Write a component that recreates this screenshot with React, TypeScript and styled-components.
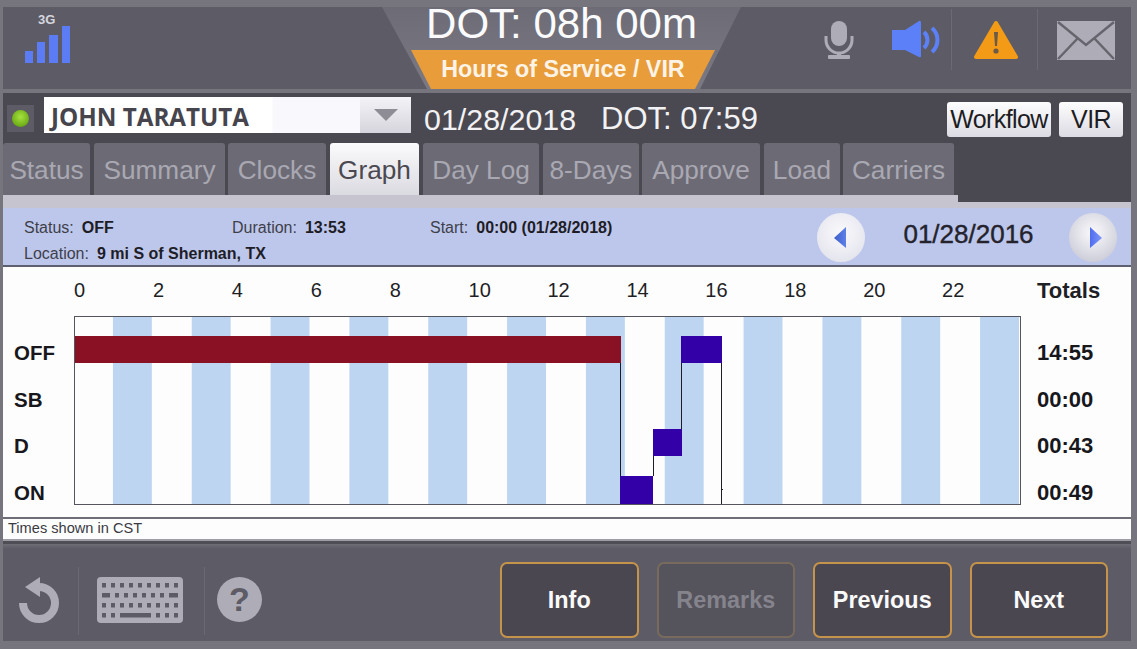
import React from 'react';
import styled, {createGlobalStyle} from 'styled-components';

const GlobalStyle = createGlobalStyle`
  html, body {
    margin: 0;
    padding: 0;
    background: #76757e;
  }
  * {
    box-sizing: border-box;
  }
`;

const Screen = styled.div`
  width: 1137px;
  height: 649px;
  padding: 7px 6px 8px 3px;
  background: #76757e;
  font-family: "Liberation Sans", Arial, sans-serif;
  overflow: hidden;
`;

const TopBar = styled.header`
  display: flex;
  height: 82px;
  background: #5d5b65;
`;
const SignalArea = styled.div`
  width: 379px;
  padding: 7px 0 0 22px;
`;
const SignalLabel = styled.div`
  padding-left: 13px;
  height: 12px;
  font-size: 13px;
  line-height: 12px;
  font-weight: bold;
  color: #d5d5de;
`;
const SignalBars = styled.div`
  display: flex;
  align-items: flex-end;
  gap: 4px;
  height: 37px;
`;
const SignalBar = styled.span<{$h: number}>`
  width: 8.2px;
  height: ${p => p.$h}px;
  background: #5b7cf5;
`;
const DotPlate = styled.div`
  width: 359px;
  height: 82px;
  background: linear-gradient(#6d6c76, #7b7a84);
  clip-path: polygon(0 0, 100% 0, 318px 100%, 45px 100%);
`;
const DotText = styled.div`
  height: 43px;
  margin-top: -6px;
  text-align: center;
  font-size: 42px;
  line-height: 45px;
  color: #fbfbfd;
`;
const HosBadge = styled.div`
  width: 304px;
  height: 39px;
  margin: 6px 0 0 29px;
  background: #e89c3a;
  clip-path: polygon(0 0, 100% 0, 284px 100%, 20px 100%);
  text-align: center;
  font-size: 23.3px;
  line-height: 38px;
  font-weight: bold;
  color: #fbf3e6;
`;
const StatusIcons = styled.div`
  flex: 1;
  display: flex;
  align-items: flex-start;
  padding-top: 13px;
`;
const IconSlot = styled.div<{$ml: number}>`
  display: flex;
  margin-left: ${p => p.$ml}px;
`;
const IconDivider = styled.span<{$ml: number}>`
  width: 1px;
  height: 61px;
  margin: -11px 0 0 ${p => p.$ml}px;
  background: #6b6a74;
`;

const Separator = styled.div`
  height: 4px;
  background: #76757e;
`;

const DriverRow = styled.div`
  display: flex;
  align-items: flex-start;
  height: 50px;
  padding: 0 8px 0 4px;
  background: #4a4850;
`;
const LedBox = styled.div`
  display: flex;
  align-items: center;
  justify-content: center;
  width: 27px;
  height: 27px;
  margin-top: 12px;
  background: #5d5b65;
`;
const Led = styled.span`
  width: 17px;
  height: 17px;
  border-radius: 50%;
  background: radial-gradient(circle at 50% 40%, #a6e23f, #6aaa14 75%);
`;
const DriverSelect = styled.div`
  display: flex;
  width: 367px;
  height: 36px;
  margin: 4px 0 0 10px;
  background: linear-gradient(90deg, #fff 228px, #f8f8fd 229px);
`;
const DriverName = styled.div`
  flex: 1;
  padding-left: 7px;
  font-family: "Open Sans", "Noto Sans", sans-serif;
  font-size: 24.2px;
  line-height: 39px;
  font-weight: bold;
  color: #46444c;
`;
const SelectArrow = styled.div`
  display: flex;
  align-items: center;
  justify-content: center;
  width: 51px;
  background: linear-gradient(#f3f3f7, #d6d5dd);

  &::after {
    content: '';
    border-left: 12px solid transparent;
    border-right: 12px solid transparent;
    border-top: 12px solid #8e8d96;
  }
`;
const DateText = styled.div<{$ml: number; $fs: number}>`
  margin: 7px 0 0 ${p => p.$ml}px;
  font-size: ${p => p.$fs}px;
  line-height: 38px;
  color: #f2f2f5;
`;
const SmallButton = styled.button<{$w: number; $ml: string}>`
  width: ${p => p.$w}px;
  height: 35px;
  margin: 9px 0 0 ${p => p.$ml};
  padding: 0;
  border: 0;
  border-radius: 3px;
  background: linear-gradient(#fdfdfe, #dcdbe3);
  font-family: inherit;
  font-size: 25px;
  letter-spacing: -0.6px;
  color: #1d1c22;
`;

const TabBar = styled.nav`
  height: 59px;
  background: #4a4850;
`;
const Tabs = styled.div`
  display: flex;
  height: 52px;
`;
const Tab = styled.div<{$w: number; $ml: number; $active?: boolean}>`
  width: ${p => p.$w}px;
  margin-left: ${p => p.$ml}px;
  border-radius: 3px 3px 0 0;
  background: ${p => (p.$active ? 'linear-gradient(#fbfbfc, #dadae1)' : '#6c6b75')};
  text-align: center;
  font-size: 26.2px;
  line-height: 54px;
  color: ${p => (p.$active ? '#4a4850' : '#a9a8b2')};
`;
const TabStrip = styled.div`
  width: 955px;
  height: 7px;
  background: #c5c4cf;
`;
const TabBase = styled.div`
  height: 6px;
  background: #c5c4cf;
`;

const InfoPanel = styled.section`
  display: flex;
  justify-content: space-between;
  height: 59px;
  background: #bdc7ec;
  border-bottom: 2px solid #5e6070;
`;
const InfoFields = styled.div`
  display: flex;
  flex-direction: column;
  gap: 7px;
  padding: 10px 0 0 21px;
`;
const InfoRow = styled.div`
  display: flex;
`;
const InfoField = styled.div<{$w?: number}>`
  width: ${p => (p.$w ? `${p.$w}px` : 'auto')};
  font-size: 16px;
  line-height: 19px;
  color: #3f3f4a;

  b {
    margin-left: 8px;
    color: #1e1d26;
  }
`;
const DateNav = styled.div`
  display: flex;
  align-items: flex-start;
  padding: 5px 14px 0 0;
`;
const RoundButton = styled.div<{$shade: string}>`
  display: flex;
  align-items: center;
  justify-content: center;
  width: 48px;
  height: 49px;
  border-radius: 50%;
  background: radial-gradient(circle at 50% 40%, #fafafc, ${p => p.$shade} 85%);
`;
const NavDate = styled.div`
  width: 204px;
  padding-left: 3px;
  text-align: center;
  font-size: 26px;
  line-height: 42px;
  -webkit-text-stroke: 0.4px #24232b;
  color: #24232b;
`;

const GraphArea = styled.section`
  display: grid;
  grid-template-columns: 71px 947px 1fr;
  grid-template-rows: 49px 189px 1fr;
  height: 252px;
  background: #fdfdfe;
  border-bottom: 2px solid #6f6e78;
`;
const Hours = styled.div`
  grid-column: 2;
  display: grid;
  grid-template-columns: repeat(12, 1fr);
  padding-top: 11px;
`;
const Hour = styled.span`
  font-size: 20px;
  line-height: 24px;
  color: #1f1f26;
`;
const TotalsTitle = styled.div`
  padding: 12px 0 0 16px;
  font-size: 22px;
  line-height: 24px;
  font-weight: bold;
  color: #1f1f26;
`;
const RowLabels = styled.div<{$pl: number; $fs: number}>`
  display: flex;
  flex-direction: column;
  height: 200px;
  padding: 14px 0 0 ${p => p.$pl}px;
  font-size: ${p => p.$fs}px;
`;
const RowLabel = styled.div`
  height: 46.7px;
  line-height: 46px;
  font-weight: bold;
  color: #17171c;
`;
const Plot = styled.svg`
  display: block;
  grid-column: 2;
  grid-row: 2;
`;

const Note = styled.div`
  height: 22px;
  padding-left: 5px;
  background: #fdfdfe;
  border-bottom: 2px solid #9e9da6;
  font-size: 14.6px;
  line-height: 19px;
  color: #3a3a42;
`;

const BottomBar = styled.footer`
  display: flex;
  align-items: flex-start;
  height: 100px;
  background: linear-gradient(#6e6d76, #5d5b65 5px);
  border-top: 3px solid #4f4e57;
`;
const ToolIcons = styled.div`
  display: flex;
  align-items: flex-start;
  width: 497px;
  padding: 33px 0 0 15px;
`;
const ToolDivider = styled.span<{$ml: number}>`
  width: 1px;
  height: 68px;
  margin: -10px 0 0 ${p => p.$ml}px;
  background: #6b6a74;
`;
const HelpIcon = styled.div`
  width: 45px;
  height: 45px;
  margin-left: 12px;
  border-radius: 50%;
  background: #aeadb7;
  text-align: center;
  font-size: 34px;
  line-height: 45px;
  font-weight: bold;
  color: #5d5b65;
`;
const Actions = styled.div`
  display: flex;
  gap: 18px;
  padding-top: 18px;
`;
const ActionButton = styled.button<{$disabled?: boolean}>`
  width: 138.5px;
  height: 76px;
  padding: 0;
  border: 2px solid ${p => (p.$disabled ? '#786a5c' : '#c6934a')};
  border-radius: 7px;
  background: ${p => (p.$disabled ? '#55535c' : '#4a4750')};
  font-family: inherit;
  font-size: 23.4px;
  font-weight: bold;
  color: ${p => (p.$disabled ? '#85848d' : '#fafafa')};
`;

const grey = '#aeadb7';

function MicIcon() {
    return <svg width="30" height="39" viewBox="0 0 30 39">
        <rect x="7" y="1" width="16" height="25" rx="8" fill={grey}/>
        <path d="M2 16v4a13 13 0 0 0 26 0v-4" fill="none" stroke={grey} strokeWidth="3"/>
        <rect x="13" y="32" width="4" height="5" fill={grey}/>
        <rect x="4" y="35" width="22" height="4" rx="1" fill={grey}/>
    </svg>;
}

function SpeakerIcon() {
    return <svg width="48" height="39" viewBox="0 0 48 39">
        <path d="M0 10h13L27 1q2 -1 2 2v33q0 2 -2 1L13 30H0z" fill="#5b80f8"/>
        <path d="M32 12a11 11 0 0 1 0 16" fill="none" stroke="#5b80f8" strokeWidth="4"/>
        <path d="M40 8a16 16 0 0 1 0 24" fill="none" stroke="#5b80f8" strokeWidth="4"/>
    </svg>;
}

function WarningIcon() {
    return <svg width="44" height="40" viewBox="0 0 44 40">
        <path d="M22 3L42 37H2z" fill="#f39a16" stroke="#f39a16" strokeWidth="4" strokeLinejoin="round"/>
        <path d="M20 12h4l-1 14h-2z" fill="#6b5a48"/>
        <circle cx="22" cy="31" r="2.600" fill="#6b5a48"/>
    </svg>;
}

function MailIcon() {
    return <svg width="58" height="39" viewBox="0 0 58 39" style={{marginTop: 1}}>
        <rect width="58" height="39" fill={grey}/>
        <path d="M1 1L29 24L57 1M1 38L21 17M57 38L37 17" fill="none" stroke="#66656e" strokeWidth="2.500"/>
    </svg>;
}

function RefreshIcon() {
    return <svg width="44" height="46" viewBox="0 0 44 46" style={{flexShrink: 0}}>
        <path d="M5 26a16 16 0 1 0 16-16" fill="none" stroke={grey} strokeWidth="8"/>
        <path d="M7 10L22 0V20z" fill={grey}/>
    </svg>;
}

function KeyboardIcon() {
    const rows = [
        [[6, 4], [15, 4], [24, 4], [33, 4], [42, 4], [51, 4], [60, 4], [69, 4], [78, 4]],
        [[6, 8], [19, 4], [28, 4], [37, 4], [46, 4], [55, 4], [64, 4], [73, 9]],
        [[6, 4], [15, 4], [24, 4], [33, 4], [42, 4], [51, 4], [60, 4], [69, 4], [78, 4]],
        [[6, 4], [15, 4], [24, 31], [60, 4], [69, 4], [78, 4]],
    ];
    return <svg width="86" height="46" viewBox="0 0 86 46" style={{flexShrink: 0, marginLeft: 18}}>
        <rect width="86" height="46" rx="4" fill={grey}/>
        {rows.map((row, y) => row.map(([x, w]) =>
            <rect key={`${y}-${x}`} x={x - 1} y={6 + y * 10} width={w} height="4.500" fill="#5d5b65"/>
        ))}
    </svg>;
}

function LeftArrow() {
    return <svg width="12" height="21" viewBox="0 0 12 21" style={{marginRight: 2}}>
        <defs>
            <linearGradient id="leftFill" x1="0" y1="0" x2="1" y2="0">
                <stop offset="0" stopColor="#3f5fc8"/>
                <stop offset="1" stopColor="#5f80e8"/>
            </linearGradient>
        </defs>
        <path d="M12 0V21L0 11z" fill="url(#leftFill)"/>
    </svg>;
}

function RightArrow() {
    return <svg width="12" height="21" viewBox="0 0 12 21" style={{marginLeft: 5}}>
        <defs>
            <linearGradient id="rightFill" x1="0" y1="0" x2="1" y2="0">
                <stop offset="0" stopColor="#4f6cf0"/>
                <stop offset="1" stopColor="#7f98f6"/>
            </linearGradient>
        </defs>
        <path d="M0 0V21L12 11z" fill="url(#rightFill)"/>
    </svg>;
}

const colW = 946 / 24;

function GraphPlot() {
    const x = (px: number) => px - 74;
    const y = (px: number) => px - 316;
    return <Plot width="947" height="189" viewBox="0 0 947 189">
        <rect x="0.500" y="0.500" width="946" height="188" fill="#fdfdfe"/>
        {Array.from({length: 12}).map((_, i) =>
            <rect key={i} x={colW * (2 * i + 1) - 0.5} y="1" width={colW - 0.5} height="187" fill="#bdd5f1"/>
        )}
        <rect x="0.500" y="0.500" width="946" height="188" fill="none" stroke="#55555f"/>
        <rect x="1" y={y(336)} width={x(620)} height="27" fill="#8a1024"/>
        <path d={`M${x(620.5)} ${y(363)}V${y(476)}M${x(653.5)} ${y(456)}V${y(476)}M${x(681.5)} ${y(363)}V${y(429)}M${x(721.5)} ${y(363)}V${y(504)}M${x(721)} ${y(489.5)}h2`}
              stroke="#1d1c28" strokeWidth="1" fill="none"/>
        <rect x={x(620)} y={y(476)} width="33" height="28" fill="#3300a8"/>
        <rect x={x(653)} y={y(429)} width="29" height="27" fill="#3300a8"/>
        <rect x={x(681)} y={y(336)} width="41" height="27" fill="#3300a8"/>
    </Plot>;
}

const tabs = [
    {name: 'Status', w: 87, ml: 0},
    {name: 'Summary', w: 131, ml: 4},
    {name: 'Clocks', w: 98, ml: 3},
    {name: 'Graph', w: 89, ml: 4},
    {name: 'Day Log', w: 116, ml: 4},
    {name: '8-Days', w: 96, ml: 4},
    {name: 'Approve', w: 118, ml: 3},
    {name: 'Load', w: 76, ml: 4},
    {name: 'Carriers', w: 111, ml: 3},
];
const hours = [0, 2, 4, 6, 8, 10, 12, 14, 16, 18, 20, 22];

export default function App() {
    return (
        <Screen>
            <GlobalStyle/>
            <TopBar>
                <SignalArea>
                    <SignalLabel>3G</SignalLabel>
                    <SignalBars>
                        {[12, 21, 28, 37].map(h => <SignalBar key={h} $h={h}/>)}
                    </SignalBars>
                </SignalArea>
                <DotPlate>
                    <DotText>DOT: 08h 00m</DotText>
                    <HosBadge>Hours of Service / VIR</HosBadge>
                </DotPlate>
                <StatusIcons>
                    <IconSlot $ml={83}><MicIcon/></IconSlot>
                    <IconSlot $ml={38}><SpeakerIcon/></IconSlot>
                    <IconDivider $ml={11}/>
                    <IconSlot $ml={22}><WarningIcon/></IconSlot>
                    <IconDivider $ml={19}/>
                    <IconSlot $ml={19}><MailIcon/></IconSlot>
                </StatusIcons>
            </TopBar>
            <Separator/>
            <DriverRow>
                <LedBox><Led/></LedBox>
                <DriverSelect>
                    <DriverName>JOHN TARATUTA</DriverName>
                    <SelectArrow/>
                </DriverSelect>
                <DateText $ml={13} $fs={30.4}>01/28/2018</DateText>
                <DateText $ml={25} $fs={31}>DOT: 07:59</DateText>
                <SmallButton $w={104} $ml="auto">Workflow</SmallButton>
                <SmallButton $w={64} $ml="8px">VIR</SmallButton>
            </DriverRow>
            <TabBar>
                <Tabs>
                    {tabs.map(t => <Tab key={t.name} $w={t.w} $ml={t.ml} $active={t.name === 'Graph'}>{t.name}</Tab>)}
                </Tabs>
                <TabStrip/>
            </TabBar>
            <TabBase/>
            <InfoPanel>
                <InfoFields>
                    <InfoRow>
                        <InfoField $w={208}>Status:<b>OFF</b></InfoField>
                        <InfoField $w={198}>Duration:<b>13:53</b></InfoField>
                        <InfoField>Start:<b>00:00 (01/28/2018)</b></InfoField>
                    </InfoRow>
                    <InfoRow>
                        <InfoField>Location:<b>9 mi S of Sherman, TX</b></InfoField>
                    </InfoRow>
                </InfoFields>
                <DateNav>
                    <RoundButton $shade="#e2e2ec"><LeftArrow/></RoundButton>
                    <NavDate>01/28/2016</NavDate>
                    <RoundButton $shade="#c9c9d6"><RightArrow/></RoundButton>
                </DateNav>
            </InfoPanel>
            <GraphArea>
                <Hours>
                    {hours.map(h => <Hour key={h}>{h}</Hour>)}
                </Hours>
                <TotalsTitle>Totals</TotalsTitle>
                <RowLabels $pl={11} $fs={20.5}>
                    {['OFF', 'SB', 'D', 'ON'].map(l => <RowLabel key={l}>{l}</RowLabel>)}
                </RowLabels>
                <GraphPlot/>
                <RowLabels $pl={16} $fs={22}>
                    {['14:55', '00:00', '00:43', '00:49'].map((l, i) => <RowLabel key={i}>{l}</RowLabel>)}
                </RowLabels>
            </GraphArea>
            <Note>Times shown in CST</Note>
            <BottomBar>
                <ToolIcons>
                    <RefreshIcon/>
                    <ToolDivider $ml={16}/>
                    <KeyboardIcon/>
                    <ToolDivider $ml={21}/>
                    <HelpIcon>?</HelpIcon>
                </ToolIcons>
                <Actions>
                    <ActionButton>Info</ActionButton>
                    <ActionButton $disabled>Remarks</ActionButton>
                    <ActionButton>Previous</ActionButton>
                    <ActionButton>Next</ActionButton>
                </Actions>
            </BottomBar>
        </Screen>
    );
}
